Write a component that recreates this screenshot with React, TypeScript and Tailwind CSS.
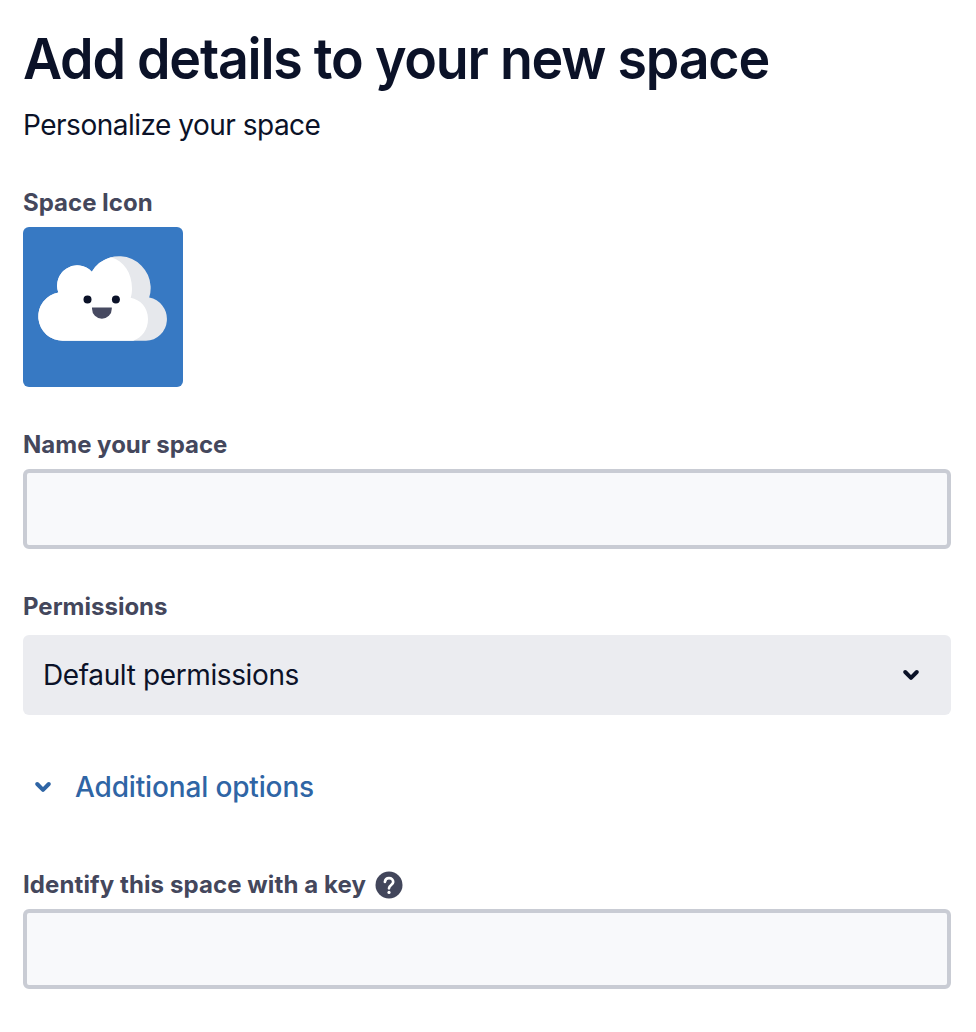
import React from "react";

function CloudIcon() {
  return (
    <svg viewBox="0 0 160 160" className="block size-full" aria-hidden="true">
      <path
        d="M40.2 113.8A24.4 24.4 0 0 1 35.3 65.4A20.1 20.1 0 0 1 68.8 44.7A31.7 31.7 0 0 1 126.2 70.6A21.8 21.8 0 0 1 123 113.8Z"
        fill="#e6e8ec"
      />
      <path
        d="M40.2 113.8A24.4 24.4 0 0 1 35.3 65.4A20.1 20.1 0 0 1 68.8 44.7A31.7 31.7 0 0 1 88 30.2C101 34 109 46 109 61.5C109 65 108.6 68 107.7 70.7C117 72.5 125 80 125 92C125 103 119 110.5 110.3 113.8Z"
        fill="#fff"
      />
      <circle cx="64.5" cy="72.4" r="4" fill="#0b1228" />
      <circle cx="92.9" cy="72.4" r="4" fill="#0b1228" />
      <path d="M69 80.4H88.8V81.8A9.9 9.9 0 0 1 69 81.8Z" fill="#474a61" />
    </svg>
  );
}

function Chevron({ className }: { className: string }) {
  return (
    <svg viewBox="0 0 20 20" className={className} fill="none" stroke="currentColor" strokeWidth="4" strokeLinecap="round" strokeLinejoin="round" aria-hidden="true">
      <path d="M4.2 7L10 12.8L15.8 7" />
    </svg>
  );
}

function HelpIcon() {
  return (
    <svg viewBox="0 0 28 28" className="size-7" aria-hidden="true">
      <circle cx="14" cy="14" r="13.5" fill="#42465b" />
      <path d="M9.9 10.8C10.2 8.5 11.8 7.2 14 7.2C16.5 7.2 18.2 8.8 18.2 11C18.2 14 14 14 14 17.3" fill="none" stroke="#fff" strokeWidth="2.7" strokeLinecap="round" />
      <circle cx="14" cy="21.4" r="1.6" fill="#fff" />
    </svg>
  );
}

const label = "block h-8 text-[24px] leading-8 font-[650] text-[#44475c]";
const field =
  "block h-20 w-full rounded-[6px] border-4 border-[#c9ccd4] bg-[#f8f9fb] px-4 text-[28px] text-[#0b1228] outline-none";

export default function App() {
  return (
    <main className="h-[1032px] w-full bg-white pr-[25px] pl-[23px] font-['Inter',sans-serif] text-[#0b1228]">
      <h1 className="origin-left scale-x-[0.943] pt-[23px] text-[57px] leading-[72px] font-semibold tracking-[-1.3px] whitespace-nowrap">Add details to your new space</h1>
      <p className="mt-[10px] h-10 text-[28px] leading-10 tracking-[-0.5px] whitespace-nowrap">Personalize your space</p>

      <section className="mt-[42px]">
        <span className={label}>Space Icon</span>
        <div className="mt-2 size-40 overflow-hidden rounded-[6px] bg-[#3779c3]">
          <CloudIcon />
        </div>
      </section>

      <section className="mt-[42px]">
        <label htmlFor="name" className={label}>
          <span>Name your space</span>
        </label>
        <input id="name" className={`${field} mt-2`} />
      </section>

      <section className="mt-[42px]">
        <span className={label}>Permissions</span>
        <button className="mt-3 flex h-20 w-full items-center justify-between rounded-[6px] bg-[#ebecf0] pr-[30px] pl-5 text-[28px] tracking-[-0.38px]">
          <span>Default permissions</span>
          <Chevron className="size-5" />
        </button>
      </section>

      <button className="mt-[52px] ml-[10px] flex h-10 items-center text-[28px] font-medium tracking-[-0.15px] text-[#2f65a5]">
        <Chevron className="size-5" />
        <span className="ml-[22px]">Additional options</span>
      </button>

      <section className="mt-[62px]">
        <label htmlFor="key" className="flex h-8 items-center text-[24px] leading-8 font-[650] tracking-[0.1px] text-[#44475c]">
          <span className="w-[342px] whitespace-nowrap">Identify this space with a key</span>
          <span className="ml-[10px]">
            <HelpIcon />
          </span>
        </label>
        <input id="key" className={`${field} mt-2`} />
      </section>
    </main>
  );
}
